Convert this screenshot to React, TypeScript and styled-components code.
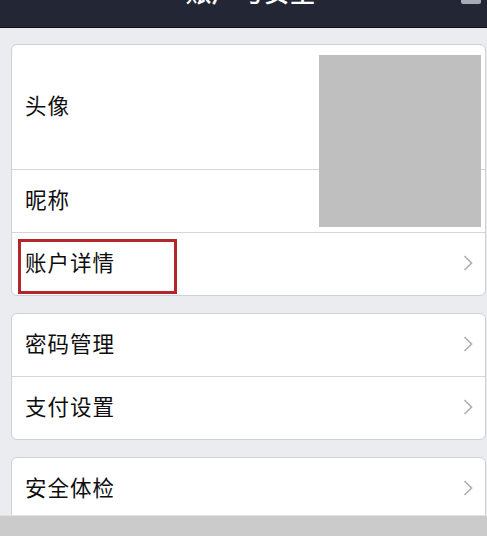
import React from "react";
import styled, { createGlobalStyle } from "styled-components";

const GlobalStyle = createGlobalStyle`
  body {
    margin: 0;
    font-family: "Noto Sans CJK SC", "Noto Sans", sans-serif;
    background: #ebecf0;
  }
`;

const rows2 = ["密码管理", "支付设置"];

const Chevron = () => (
  <ArrowSvg width="12" height="18" viewBox="0 0 12 18">
    <path d="M2.5 2 L9.5 9 L2.5 16" fill="none" stroke="#b0b0b3" strokeWidth="1.7" />
  </ArrowSvg>
);

const App = () => {
  return (
    <Page>
      <GlobalStyle />
      <NavBar>
        <Title>账户与安全</Title>
        <NavIcon />
      </NavBar>
      <Content>
        <Card>
          <Row $tall>
            <Label>头像</Label>
          </Row>
          <Row>
            <Label>昵称</Label>
          </Row>
          <Row>
            <Label>账户详情</Label>
            <Chevron />
            <Highlight />
          </Row>
          <AvatarMask />
        </Card>

        <Card>
          {rows2.map((label) => (
            <Row key={label}>
              <Label>{label}</Label>
              <Chevron />
            </Row>
          ))}
        </Card>

        <Card>
          <Row>
            <Label>安全体检</Label>
            <Chevron />
          </Row>
        </Card>
      </Content>
      <BottomBar />
    </Page>
  );
};

export default App;

const Page = styled.div`
  width: 487px;
  height: 536px;
  overflow: hidden;
  display: flex;
  flex-direction: column;
  background: #ebecf0;
`;

const NavBar = styled.div`
  flex: none;
  height: 27px;
  background: #232735;
  border-bottom: 1px solid #0d0f14;
  overflow: hidden;
  display: flex;
  justify-content: center;
  position: relative;
`;

const Title = styled.div`
  margin-top: -22px;
  margin-left: 14px;
  font-size: 26px;
  line-height: 26px;
  font-weight: 500;
  color: #ffffff;
`;

const NavIcon = styled.div`
  position: absolute;
  right: 6px;
  top: -6px;
  width: 20px;
  height: 10px;
  border-radius: 2px;
  background: #a9abb2;
`;

const Content = styled.div`
  flex: 1;
  min-height: 0;
  overflow: hidden;
  display: flex;
  flex-direction: column;
  gap: 17px;
  padding: 16px 1px 0 11px;
`;

const Card = styled.div`
  position: relative;
  flex: none;
  min-height: 70px;
  background: #ffffff;
  border: 1px solid #cfd0d4;
  border-radius: 6px;
  display: flex;
  flex-direction: column;
`;

const Row = styled.div<{ $tall?: boolean }>`
  position: relative;
  height: ${(p) => (p.$tall ? "124px" : "62px")};
  display: flex;
  align-items: center;
  justify-content: space-between;
  padding: 0 11px 0 13px;
  & + & {
    border-top: 1px solid #d6d6da;
  }
`;

const Label = styled.div`
  font-size: 21.5px;
  line-height: 22px;
  margin-top: -4px;
  color: #0e0e0e;
  letter-spacing: 1px;
`;

const ArrowSvg = styled.svg`
  display: block;
  margin-top: -2px;
`;

const AvatarMask = styled.div`
  position: absolute;
  top: 10px;
  right: 4px;
  width: 162px;
  height: 172px;
  background: #bfbfbf;
`;

const Highlight = styled.div`
  position: absolute;
  left: 6px;
  top: 6px;
  width: 153px;
  height: 49px;
  border: 3px solid #b5262c;
  pointer-events: none;
`;

const BottomBar = styled.div`
  flex: none;
  height: 20px;
  background: #cbcbcb;
  border-top: 1px solid #e2e2e2;
`;
